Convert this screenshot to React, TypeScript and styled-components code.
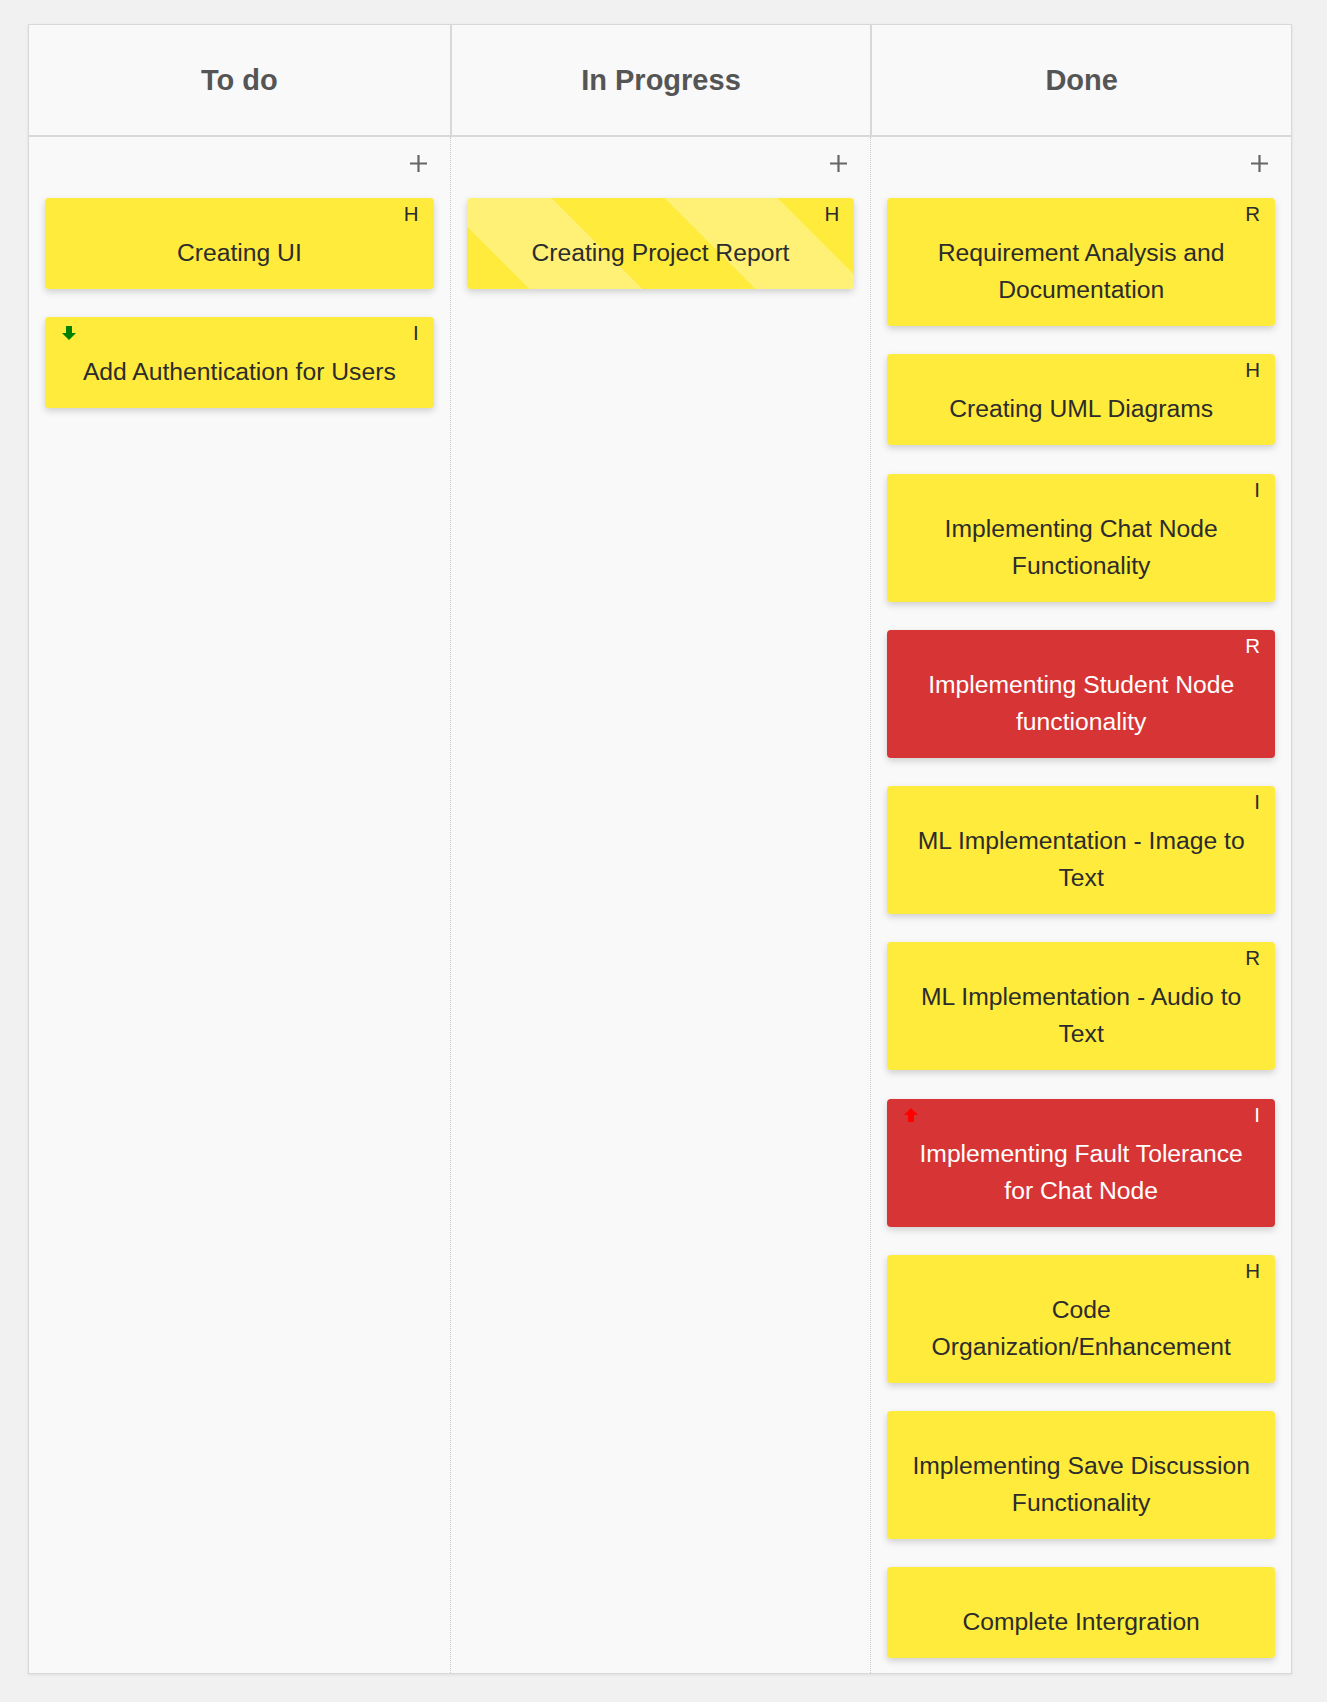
import React from 'react';
import styled, {createGlobalStyle, css} from 'styled-components';

const GlobalStyle = createGlobalStyle`
  html, body {
    margin: 0;
    padding: 0;
    background: #f1f1f2;
    font-family: "Liberation Sans", Arial, sans-serif;
  }
`;

const colors = {
  yellow: '#ffeb3b',
  yellowLight: '#fff176',
  red: '#d73535',
  border: '#d8d8d8',
  headerText: '#555555',
  cardText: '#2c2c2c',
};

type Tone = 'yellow' | 'red' | 'striped';

interface Task {
  title: string;
  label?: string;
  tone?: Tone;
  arrow?: 'up' | 'down';
}

interface Column {
  name: string;
  tasks: Task[];
}

const board: Column[] = [
  {
    name: 'To do',
    tasks: [
      {title: 'Creating UI', label: 'H'},
      {title: 'Add Authentication for Users', label: 'I', arrow: 'down'},
    ],
  },
  {
    name: 'In Progress',
    tasks: [{title: 'Creating Project Report', label: 'H', tone: 'striped'}],
  },
  {
    name: 'Done',
    tasks: [
      {title: 'Requirement Analysis and Documentation', label: 'R'},
      {title: 'Creating UML Diagrams', label: 'H'},
      {title: 'Implementing Chat Node Functionality', label: 'I'},
      {title: 'Implementing Student Node functionality', label: 'R', tone: 'red'},
      {title: 'ML Implementation - Image to Text', label: 'I'},
      {title: 'ML Implementation - Audio to Text', label: 'R'},
      {title: 'Implementing Fault Tolerance for Chat Node', label: 'I', tone: 'red', arrow: 'up'},
      {title: 'Code Organization/Enhancement', label: 'H'},
      {title: 'Implementing Save Discussion Functionality'},
      {title: 'Complete Intergration'},
    ],
  },
];

const Page = styled.div`
  padding: 24px 35px 30px 28px;
`;

const Board = styled.div`
  display: grid;
  grid-template-columns: repeat(3, 1fr);
  width: 1264px;
  box-sizing: border-box;
  background: #f9f9fa;
  border: 1px solid ${colors.border};
  box-shadow: 0 1px 3px rgba(0, 0, 0, 0.08);
`;

const ColumnHeader = styled.div<{$first: boolean}>`
  height: 110px;
  display: flex;
  align-items: center;
  justify-content: center;
  border-bottom: 2px solid ${colors.border};
  border-left: ${p => (p.$first ? 'none' : `2px solid ${colors.border}`)};
  font-size: 29px;
  font-weight: bold;
  color: ${colors.headerText};
`;

const ColumnBody = styled.div<{$first: boolean}>`
  display: flex;
  flex-direction: column;
  gap: 28.25px;
  padding: 11px 16px 15px 16px;
  border-left: ${p => (p.$first ? 'none' : '1px dotted #c8c8c8')};
`;

const AddRow = styled.div`
  height: 30px;
  margin-bottom: -8.25px;
  display: flex;
  align-items: center;
  justify-content: flex-end;
  padding-right: 7px;
`;

const AddButton = styled.button`
  border: none;
  background: none;
  padding: 0;
  width: 17px;
  height: 17px;
  display: flex;
  cursor: pointer;
`;

const toneStyles = {
  yellow: css`
    background: ${colors.yellow};
    color: ${colors.cardText};
  `,
  red: css`
    background: ${colors.red};
    color: #ffffff;
  `,
  striped: css`
    background: repeating-linear-gradient(
      45deg,
      ${colors.yellow} 0px,
      ${colors.yellow} 44px,
      ${colors.yellowLight} 44px,
      ${colors.yellowLight} 124px,
      ${colors.yellow} 124px,
      ${colors.yellow} 160px
    );
    color: ${colors.cardText};
  `,
};

const Card = styled.div<{$tone: Tone}>`
  border-radius: 4px;
  padding: 4px 15px 18px 15px;
  box-shadow: 0 3px 7px rgba(0, 0, 0, 0.17);
  text-align: center;
  ${p => toneStyles[p.$tone]}
`;

const CardTop = styled.div`
  height: 24px;
  display: flex;
  align-items: center;
  justify-content: space-between;
`;

const Label = styled.span`
  margin-left: auto;
  font-size: 20.5px;
  line-height: 24px;
`;

const ArrowIcon = styled.svg`
  margin-left: 2px;
  width: 14px;
  height: 14px;
  flex: none;
`;

const CardTitle = styled.div`
  margin-top: 8px;
  font-size: 24.7px;
  line-height: 37px;
`;

const Arrow = ({dir}: {dir: 'up' | 'down'}) => (
  <ArrowIcon viewBox="0 0 14 14">
    {dir === 'down' ? (
      <path d="M4 0h6v7h4l-7 7-7-7h4z" fill="#008000" />
    ) : (
      <path d="M4 14h6V7h4L7 0 0 7h4z" fill="#ff0000" />
    )}
  </ArrowIcon>
);

const PlusIcon = () => (
  <svg width="17" height="17" viewBox="0 0 17 17">
    <path d="M8.5 0v17M0 8.5h17" stroke="#666" strokeWidth="2.2" />
  </svg>
);

const App = () => {
  return (
    <Page>
      <GlobalStyle />
      <Board>
        {board.map((col, i) => (
          <ColumnHeader key={col.name} $first={i === 0}>
            {col.name}
          </ColumnHeader>
        ))}
        {board.map((col, i) => (
          <ColumnBody key={col.name} $first={i === 0}>
            <AddRow>
              <AddButton aria-label="Add task">
                <PlusIcon />
              </AddButton>
            </AddRow>
            {col.tasks.map(task => (
              <Card key={task.title} $tone={task.tone || 'yellow'}>
                <CardTop>
                  {task.arrow && <Arrow dir={task.arrow} />}
                  {task.label && <Label>{task.label}</Label>}
                </CardTop>
                <CardTitle>{task.title}</CardTitle>
              </Card>
            ))}
          </ColumnBody>
        ))}
      </Board>
    </Page>
  );
};

export default App;
